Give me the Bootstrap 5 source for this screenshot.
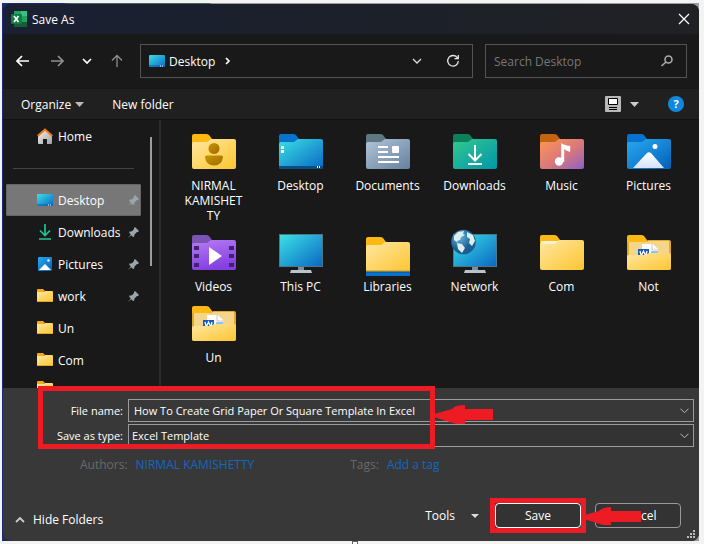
<!DOCTYPE html>
<html lang="en">
<head>
<meta charset="utf-8">
<meta name="viewport" content="width=device-width, initial-scale=1">
<title>Save As</title>
<link href="https://cdn.jsdelivr.net/npm/bootstrap@5.3.0/dist/css/bootstrap.min.css" rel="stylesheet">
<style>
body{font-family:"Open Sans","Noto Sans",sans-serif;font-size:12px;line-height:15px;color:#fff;background:#f3f3f3;min-height:100vh;padding:3px 5px 3px 2px}
button,input,select{font-family:inherit;font-size:12px;line-height:15px}
svg{display:block;flex:none}
a{text-decoration:none;color:inherit}
.backdrop{background:linear-gradient(90deg,#1b2c74 0,#1b2c74 60px,#46685c 70px,#46685c 207px,#9a9a9a 210px);padding:1px 0 0 1px}
.dialog{background:#191919;border-radius:8px;overflow:hidden}
.titlebar{height:30px;background:linear-gradient(90deg,#1a1f33,#1c2029 55%,#202124);padding:0 9px 0 8px;gap:5px}
.plain{background:none;border:0;padding:0;color:inherit}
.navrow{padding:10px 12px 11px 5px}
.navbtn{width:30px;height:34px}
.fieldbox{border:1px solid #535353;height:34px;min-width:0}
.address{flex:333 1 333px;margin-left:8px}
.finder{flex:202 1 202px;margin-left:12px}
.finder input{color:#fff;outline:0;min-width:0}
.finder input::placeholder{color:#777;opacity:1}
.tools{height:30px;background:#202020;padding:0 15px 0 18px}
.middle{height:269px;border-top:1px solid #111}
.side{width:158px;padding-left:3px;border-right:2px solid #2b2b2b;overflow:hidden;flex:none}
.places{width:135px;flex:none}
.place{height:32px;padding:0 2px 0 31px;gap:5px}
.place svg:last-child{margin-left:auto}
.place.chosen{background:#777;border-radius:1px;padding-left:30px;border:1px solid #656565;padding-right:1px}
.rule{height:32px;padding:16px 7px 0}
.rule hr{margin:0;border-top:1px solid #444;opacity:1}
.thumb{width:2px;height:129px;background:#9d9d9d;margin:17px 0 0 9px}
.files{display:grid;grid-template-columns:repeat(auto-fill,87px);align-content:start;padding:8px 0 0 9px;flex:1 1 0;min-width:0}
.file{display:flex;flex-direction:column;align-items:center;gap:2px;padding-bottom:6px;text-align:center}
.file span{width:66px;overflow-wrap:anywhere}
.foot{background:#383838;padding:11px 5px 13px 0}
.formrow{gap:5px}
.formrow+.formrow{padding-top:2px}
.formrow label{width:120px;text-align:right;flex:none;font-size:11px}
.combo{font-size:11px;height:23px;flex:1 1 0;min-width:0;color:#fff;border:1px solid #9b9b9b;border-radius:0;outline:0;background:#383838 url("data:image/svg+xml,%3Csvg xmlns='http://www.w3.org/2000/svg' width='9' height='6'%3E%3Cpath d='M.5.7l4 4 4-4' fill='none' stroke='%23bbb'/%3E%3C/svg%3E") no-repeat right 4px center;padding:0 18px 0 5px;appearance:none}
select.combo{padding-left:3px;background-color:#333}
.meta{color:#6a6a6a;padding:10px 0 0 77px}
.meta a{color:#1068c4}
.actions{padding:31px 13px 0 12px}
.push{width:86px;height:25px;border:1px solid #999;border-radius:4px;background:#333;color:#fff;padding:0}
.push.main{border-color:#fff}
.push.other{margin-left:14px}
.mark-form{position:absolute;left:35px;top:-2px;width:397px;height:63px;border:5px solid #ed1c24;pointer-events:none}
.mark-save{position:absolute;inset:-5px;border:5px solid #ed1c24;pointer-events:none}
.arrow{position:absolute;pointer-events:none}
.arrow-form{left:392px;top:15px}
.arrow-save{left:85px;top:3px}
.grip{position:absolute;right:4px;bottom:3px}
.handle{position:absolute;left:352px;bottom:0;width:6px;height:3px;border:1px solid #666;border-bottom:0;background:#fff}
</style>
<script src="https://cdn.jsdelivr.net/npm/bootstrap@5.3.0/dist/js/bootstrap.bundle.min.js"></script>
</head>
<body class="position-relative">
<svg width="0" height="0" class="position-absolute" aria-hidden="true">
<defs>
<linearGradient id="gy" x2="1" y2="1"><stop stop-color="#ffe7a2"/><stop offset="1" stop-color="#fdc530"/></linearGradient>
<linearGradient id="gb" x2="1" y2="1"><stop stop-color="#3be0e6"/><stop offset="1" stop-color="#0a68c4"/></linearGradient>
<linearGradient id="gd" x2="1" y2="1"><stop stop-color="#b3c4d8"/><stop offset="1" stop-color="#65819f"/></linearGradient>
<linearGradient id="gg" x2="1" y2="1"><stop stop-color="#34c890"/><stop offset="1" stop-color="#0096a8"/></linearGradient>
<linearGradient id="gm" x2="1" y2="1"><stop stop-color="#ff9750"/><stop offset=".55" stop-color="#d9777d"/><stop offset="1" stop-color="#8c62c4"/></linearGradient>
<linearGradient id="gp" x2="1" y2="1"><stop stop-color="#27aaf0"/><stop offset="1" stop-color="#0560b8"/></linearGradient>
<linearGradient id="gv" x2=".3" y2="1"><stop stop-color="#b77cf4"/><stop offset="1" stop-color="#8440e0"/></linearGradient>
<linearGradient id="gw" x2="0" y2="1"><stop stop-color="#fff"/><stop offset="1" stop-color="#d5e2fb"/></linearGradient>
<linearGradient id="gu" x2="1" y2="1"><stop stop-color="#c89400"/><stop offset="1" stop-color="#a06c00"/></linearGradient>
<linearGradient id="gh" x2="1" y2="1"><stop stop-color="#f4f4f4"/><stop offset="1" stop-color="#a2a2a2"/></linearGradient>
<radialGradient id="gl" cx=".35" cy=".3"><stop stop-color="#67b7e0"/><stop offset="1" stop-color="#1b5f91"/></radialGradient>
<path id="tab" d="M2 8q0-2 2-2h12q2 0 3 1l3 4v5H2z"/>
<path id="front" d="M2 16q0-2 2-2h13l4-3h23q2 0 2 2v26q0 2-2 2H4q-2 0-2-2z"/>
<g id="openfolder"><use href="#tab" fill="#fdb913"/><path d="M2 13h18l3-2h21q2 0 2 2v26q0 2-2 2H4q-2 0-2-2z" fill="#e4aa22"/><path d="M4 13h17l2-1h21v16H4z" fill="#f3d58c"/><path d="M17 15h11l5 5v10H17z" fill="#fff"/><path d="M27 15v6h6" fill="none" stroke="#c8c8c8"/><path d="M26 23h7" stroke="#8cc4f2" stroke-width="2"/><path d="M13 20h11v10H13z" fill="#185abd"/><path d="M15 22l1.300 5 2.200-5 2.200 5 1.300-5" fill="none" stroke="#fff" stroke-width="1.300"/><path d="M2 28q0-2 2-2h16l4-2h20q2 0 2 2v13q0 2-2 2H4q-2 0-2-2z" fill="url(#gy)"/></g>
<g id="screen"><path d="M21 37h6v5h-6z" fill="#7e8b98"/><path d="M14 41h20l1 3H13z" fill="#bac4ce"/><path d="M2 5h44v33H2z" fill="#507584"/><path d="M3 6h42v31H3z" fill="url(#gb)"/></g>
<g id="sfolder"><path d="M0 2q0-1 1-1h5l2 2h-1l-1 2H0z" fill="#f5ab13"/><path d="M0 4h6l2-1h7q1 0 1 1v9q0 1-1 1H1q-1 0-1-1z" fill="url(#gy)"/><path d="M0 13.500h16" stroke="#e5a61d"/></g>
<g id="sdesk"><rect y="2" width="16" height="12" rx="1" fill="url(#gb)"/><path d="M0 13h16" stroke="#075ca9"/><path d="M11 13h1M13 13h1" stroke="#fff"/></g>
<path id="pin" d="M7 0l4 4-1 1-1 0-2.500 2.500L6 10 4.500 9.500 3.200 8.200 0 11l2.700-3.500L1.500 6 1 4.800 4 4.300 6 2V1z" fill="#9aa5ac"/>
</defs>
</svg>

<div class="backdrop">
<main class="dialog position-relative">
  <header class="titlebar d-flex align-items-center">
    <svg width="16" height="16" viewBox="0 0 16 16" aria-hidden="true"><path d="M3 0h7v5H3z" fill="#21a366"/><path d="M10 0h6v5h-6z" fill="#33c481"/><path d="M3 5h7v6H3z" fill="#107c41"/><path d="M10 5h6v6h-6z" fill="#21a366"/><path d="M3 11h13v5H3z" fill="#185c37"/><rect y="3" width="11" height="10" rx="1" fill="#107c41"/><path d="M3 5l4.500 6M7.500 5L3 11" stroke="#fff" stroke-width="1.700"/></svg>
    <span>Save As</span>
    <button class="plain ms-auto" aria-label="Close"><svg width="12" height="12" viewBox="0 0 12 12"><path d="M1 1l10 10M11 1L1 11" stroke="#fff" stroke-width="1.200"/></svg></button>
  </header>

  <div class="navrow d-flex">
    <button class="plain navbtn d-flex align-items-center justify-content-center" aria-label="Back"><svg width="14" height="12" fill="none" stroke="#fff" stroke-width="1.700"><path d="M13 6H1M6 1L1 6l5 5"/></svg></button>
    <button class="plain navbtn d-flex align-items-center justify-content-center ms-1" aria-label="Forward"><svg width="14" height="12" fill="none" stroke="#8f8f8f" stroke-width="1.700"><path d="M1 6h12M8 1l5 5-5 5"/></svg></button>
    <button class="plain navbtn d-flex align-items-center justify-content-center" aria-label="Recent locations"><svg width="10" height="8" fill="none" stroke="#fff" stroke-width="1.700"><path d="M1 2l4 4 4-4"/></svg></button>
    <button class="plain navbtn d-flex align-items-center justify-content-center" aria-label="Up"><svg width="12" height="14" fill="none" stroke="#8f8f8f" stroke-width="1.300"><path d="M6 13V1.500M1 6.500l5-5 5 5"/></svg></button>
    <div class="fieldbox address d-flex align-items-center ps-2 pe-2">
      <svg width="16" height="16" aria-hidden="true"><use href="#sdesk"/></svg>
      <a href="#" class="ms-1">Desktop</a>
      <svg class="ms-2" width="10" height="10" fill="none" stroke="#fff" stroke-width="1.700"><path d="M3 2l3 3-3 3"/></svg>
      <button class="plain ms-auto me-4" aria-label="Previous locations"><svg width="10" height="8" fill="none" stroke="#ddd" stroke-width="1.300"><path d="M1 2l4 4 4-4"/></svg></button>
      <button class="plain me-1" aria-label="Refresh"><svg width="14" height="14" fill="none" stroke="#e5e5e5" stroke-width="1.300"><path d="M11.500 4A5.300 5.300 0 1 0 12.300 7M12.300 1v3.700H8.500"/></svg></button>
    </div>
    <div class="fieldbox finder d-flex align-items-center px-2">
      <input class="plain flex-grow-1" type="text" placeholder="Search Desktop" aria-label="Search Desktop">
      <svg class="me-1" width="14" height="14" fill="none" stroke="#aaa" stroke-width="1.600" aria-hidden="true"><circle cx="8.500" cy="5.500" r="3.500"/><path d="M6 8l-4.500 4"/></svg>
    </div>
  </div>

  <div class="tools d-flex align-items-center">
    <button class="plain d-flex align-items-center gap-1">Organize <svg width="9" height="5"><path d="M0 0h9L4.500 5z" fill="#bbb"/></svg></button>
    <button class="plain ms-4 ps-1">New folder</button>
    <button class="plain ms-auto d-flex align-items-center" aria-label="Change view"><svg width="16" height="16"><rect width="16" height="16" rx="1" fill="#b9b9b9"/><path d="M3.500 2.500h9v6h-9z" fill="#fff" stroke="#000"/><path d="M4 11.500h8M4 13.500h8" stroke="#000"/></svg><svg class="ms-2 me-1" width="11" height="5"><path d="M1 0h9L5.500 5z" fill="#ccc"/></svg></button>
    <button class="plain ms-4" aria-label="Help"><svg width="16" height="16"><circle cx="8" cy="8" r="8" fill="#1088db"/><text x="8" y="12" text-anchor="middle" fill="#fff" font-size="11" font-weight="700">?</text></svg></button>
  </div>

  <div class="middle d-flex">
    <nav class="side d-flex align-items-start" aria-label="Places">
      <div class="places">
        <a href="#" class="place d-flex align-items-center"><svg width="16" height="16"><path d="M1 7l7-6 7 6v8q0 1-1 1H10v-5H6v5H2q-1 0-1-1z" fill="url(#gh)"/><path d="M.7 8L8 1.500 15.300 8" fill="none" stroke="#f07a12" stroke-width="2"/></svg><span>Home</span></a>
        <div class="rule"><hr></div>
        <a href="#" class="place chosen d-flex align-items-center"><svg width="16" height="16"><use href="#sdesk"/></svg>Desktop<svg width="11" height="11"><use href="#pin"/></svg></a>
        <a href="#" class="place d-flex align-items-center"><svg width="16" height="16" fill="none" stroke="#22c395" stroke-width="1.700"><path d="M8 0v11M3 6.500l5 5 5-5M2 15h12"/></svg>Downloads<svg width="11" height="11"><use href="#pin"/></svg></a>
        <a href="#" class="place d-flex align-items-center"><svg width="16" height="16"><rect x="1" y="1" width="14" height="14" rx="1" fill="url(#gp)"/><path d="M2 14l6-6 6 6z" fill="#fff"/><circle cx="11.500" cy="4.500" r="1.200" fill="#fff"/></svg>Pictures<svg width="11" height="11"><use href="#pin"/></svg></a>
        <a href="#" class="place d-flex align-items-center"><svg width="16" height="16"><use href="#sfolder"/></svg>work<svg width="11" height="11"><use href="#pin"/></svg></a>
        <a href="#" class="place d-flex align-items-center"><svg width="16" height="16"><use href="#sfolder"/></svg><span>Un</span></a>
        <a href="#" class="place d-flex align-items-center"><svg width="16" height="16"><use href="#sfolder"/></svg><span>Com</span></a>
        <a href="#" class="place d-flex align-items-start pt-1" aria-label="More"><svg class="m-0" width="16" height="16"><use href="#sfolder"/></svg></a>
      </div>
      <div class="thumb"></div>
    </nav>
    <section class="files" aria-label="Files">
      <a href="#" class="file"><svg width="48" height="48"><use href="#tab" fill="#fdb913"/><use href="#front" fill="url(#gy)"/><circle cx="24" cy="20.500" r="5.500" fill="url(#gu)"/><path d="M15 29q0-1.500 1.500-1.500h15q1.500 0 1.500 1.500-1 8.500-9 8.500T15 29z" fill="url(#gu)"/></svg><span>NIRMAL KAMISHET<wbr>TY</span></a>
      <a href="#" class="file"><svg width="48" height="48"><use href="#tab" fill="#0872cf"/><use href="#front" fill="url(#gb)"/><path d="M2 38h44v1q0 2-2 2H4q-2 0-2-2z" fill="#084e83"/><path d="M4 18h3v3H4zM4 22h3v3H4zM40 38h1v2h-1zM42 38h1v2h-1z" fill="#fff"/></svg><span>Desktop</span></a>
      <a href="#" class="file"><svg width="48" height="48"><use href="#tab" fill="#5e7781"/><use href="#front" fill="url(#gd)"/><path d="M14 19h10M14 24h10M14 29h21M14 34h21" stroke="#fff" stroke-width="2"/><rect x="28" y="18" width="7" height="7" rx="1" fill="#fff"/></svg><span>Documents</span></a>
      <a href="#" class="file"><svg width="48" height="48"><use href="#tab" fill="#0c805b"/><use href="#front" fill="url(#gg)"/><path d="M24 17v15M17.500 26l6.500 6.500 6.500-6.500M17 36h14" fill="none" stroke="#fff" stroke-width="2"/></svg><span>Downloads</span></a>
      <a href="#" class="file"><svg width="48" height="48"><use href="#tab" fill="#c36412"/><use href="#front" fill="url(#gm)"/><circle cx="21" cy="33.500" r="4.200" fill="#fff"/><path d="M23.200 34V15q2 2 9 3v6q-4-1-6-3v13z" fill="#fff"/></svg><span>Music</span></a>
      <a href="#" class="file"><svg width="48" height="48"><use href="#tab" fill="#0872cf"/><use href="#front" fill="url(#gp)"/><path d="M8 40l14-15q2-1.500 4 0l13 15z" fill="url(#gw)"/><circle cx="30" cy="18.500" r="2.500" fill="#fff"/></svg><span>Pictures</span></a>

      <a href="#" class="file"><svg width="48" height="48"><use href="#tab" fill="#7b53b5"/><use href="#front" fill="url(#gv)"/><path d="M4 17h5v4H4zM4 25h5v4H4zM4 34h5v4H4zM39 17h5v4h-5zM39 25h5v4h-5zM39 34h5v4h-5z" fill="#42246e"/><path d="M19 18l13 9-13 9z" fill="#fff"/></svg><span>Videos</span></a>
      <a href="#" class="file"><svg width="48" height="48"><use href="#screen"/></svg><span>This PC</span></a>
      <a href="#" class="file"><svg width="48" height="48"><g transform="translate(0 2)"><use href="#tab" fill="#fdb913"/><use href="#front" fill="url(#gy)"/><path d="M2 39h44v2H2z" fill="#e9b02b"/><path d="M2 41h44v4H2z" fill="#0872cf"/><path d="M2 41h44" stroke="#064e90"/></g></svg><span>Libraries</span></a>
      <a href="#" class="file"><svg width="48" height="48"><use href="#screen"/><circle cx="12.500" cy="13" r="12.300" fill="url(#gl)"/><path d="M3 7l4-4 6-1-1 3 2 1-4 2-1 3-3 1 1 2-4-3zM6 14l5 1 3 4-3 5-4-4zM16 3l6 3 2 6-3 5-3-3 1-4-3-2z" fill="#ddeeed"/></svg><span>Network</span></a>
      <a href="#" class="file"><svg width="48" height="48"><use href="#tab" fill="#fdb913"/><use href="#front" fill="url(#gy)"/><path d="M3 12h17l-3 3H3z" fill="#fff4d2"/></svg><span>Com</span></a>
      <a href="#" class="file"><svg width="48" height="48"><use href="#openfolder"/></svg><span>Not</span></a>
      <a href="#" class="file"><svg width="48" height="48"><use href="#openfolder"/></svg><span>Un</span></a>
    </section>
  </div>

  <form class="foot position-relative" onsubmit="return false">
    <div class="formrow d-flex align-items-center">
      <label for="fname">File name:</label>
      <input id="fname" class="combo" type="text" value="How To Create Grid Paper Or Square Template In Excel">
    </div>
    <div class="formrow d-flex align-items-center">
      <label for="ftype">Save as type:</label>
      <select id="ftype" class="combo"><option>Excel Template</option></select>
    </div>
    <div class="meta d-flex">
      <span>Authors:</span><a href="#" class="ms-2">NIRMAL KAMISHETTY</a>
      <span class="ms-5 ps-5">Tags:</span><a href="#" class="ms-2">Add a tag</a>
    </div>
    <div class="actions d-flex align-items-center">
      <button type="button" class="plain d-flex align-items-center gap-2 mt-2"><svg width="10" height="8" fill="none" stroke="#ccc" stroke-width="1.800"><path d="M1 6l4-4 4 4"/></svg>Hide Folders</button>
      <button type="button" class="plain d-flex align-items-center gap-3 ms-auto me-3">Tools <svg width="8" height="4"><path d="M0 0h8L4 4z" fill="#ddd"/></svg></button>
      <div class="position-relative z-1">
        <button type="submit" class="push main d-block">Save</button>
        <div class="mark-save"></div>
        <svg class="arrow arrow-save" width="62" height="20" aria-hidden="true"><path d="M1 10l18-5q4-4 12-4v4h30v11H31v3h-8L1 12z" fill="#ed1c24"/></svg>
      </div>
      <button type="button" class="push other">Cancel</button>
    </div>
    <div class="mark-form"></div>
    <svg class="arrow arrow-form" width="100" height="22" aria-hidden="true"><path d="M39 11l18-5q3-4 13-4v4h28v11H70v4h-9L39 14z" fill="#ed1c24"/></svg>
    <svg class="grip" width="8" height="8" fill="#bbb" aria-hidden="true"><path d="M6 0h2v2H6zM3 3h2v2H3zM6 3h2v2H6zM0 6h2v2H0zM3 6h2v2H3zM6 6h2v2H6z"/></svg>
  </form>
</main>
</div>
<div class="handle"></div>
</body>
</html>
